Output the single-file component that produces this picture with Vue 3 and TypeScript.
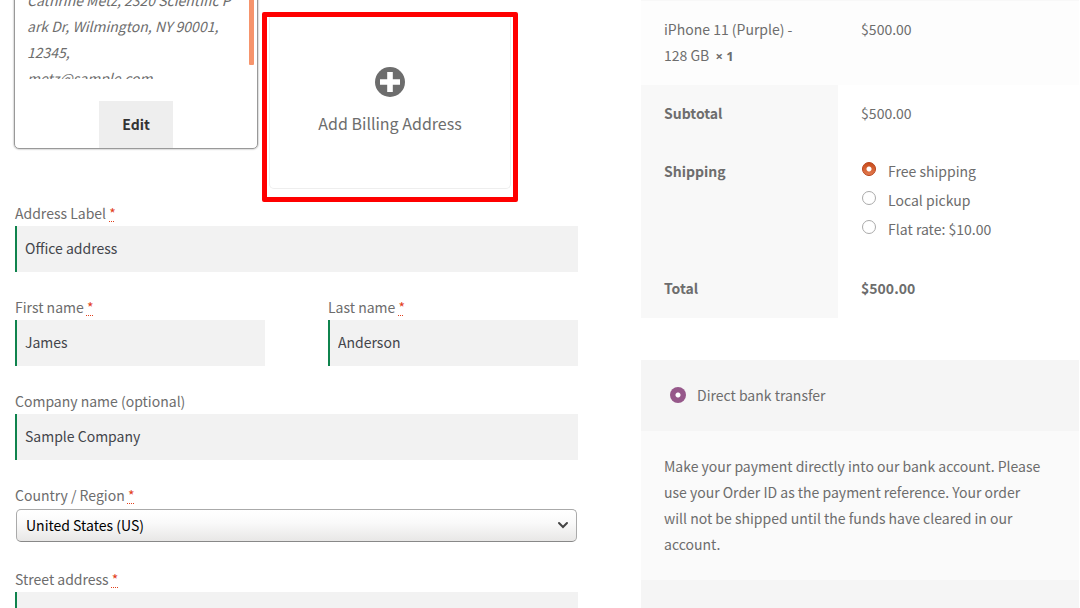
<script setup lang="ts">
import { ref } from 'vue'

interface ShippingOption {
  id: string
  label: string
}

const addressLines: string[] = [
  'Cathrine Metz, 2320 Scientific P',
  'ark Dr, Wilmington, NY 90001,',
  '12345,',
  'metz@sample.com',
]

const shippingOptions: ShippingOption[] = [
  { id: 'free', label: 'Free shipping' },
  { id: 'pickup', label: 'Local pickup' },
  { id: 'flat', label: 'Flat rate: $10.00' },
]

const addressLabel = ref('Office address')
const firstName = ref('James')
const lastName = ref('Anderson')
const company = ref('Sample Company')
const country = ref('US')
const street = ref('')
const shipping = ref('free')
const payment = ref('bank')
</script>

<template>
  <main class="checkout">
    <section class="billing">
      <div class="cards">
        <article class="card">
          <address class="address">
            <span v-for="line in addressLines" :key="line" class="address-line">{{ line }}</span>
          </address>
          <span class="thumb"></span>
          <button type="button" class="edit">Edit</button>
        </article>
        <div class="highlight">
          <button type="button" class="add">
            <svg class="plus" viewBox="0 0 30 30" aria-hidden="true">
              <circle cx="15" cy="15" r="15" fill="#6d6d6d" />
              <path d="M12.2 5h5.6v7.2H25v5.6h-7.2V25h-5.6v-7.2H5v-5.6h7.2z" fill="#fff" />
            </svg>
            <span>Add Billing Address</span>
          </button>
        </div>
      </div>

      <form class="form">
        <div class="field">
          <label for="address-label">Address Label <abbr title="required">*</abbr></label>
          <input id="address-label" v-model="addressLabel" type="text" />
        </div>
        <div class="pair">
          <div class="field">
            <label for="first-name">First name <abbr title="required">*</abbr></label>
            <input id="first-name" v-model="firstName" type="text" />
          </div>
          <div class="field">
            <label for="last-name">Last name <abbr title="required">*</abbr></label>
            <input id="last-name" v-model="lastName" type="text" />
          </div>
        </div>
        <div class="field">
          <label for="company">Company name (optional)</label>
          <input id="company" v-model="company" type="text" />
        </div>
        <div class="field">
          <label for="country">Country / Region <abbr title="required">*</abbr></label>
          <div class="select">
            <select id="country" v-model="country">
              <option value="US">United States (US)</option>
            </select>
            <svg class="chevron" viewBox="0 0 10 6" aria-hidden="true">
              <path d="M1 1l4 4 4-4" fill="none" stroke="#444" stroke-width="2" stroke-linecap="round" />
            </svg>
          </div>
        </div>
        <div class="field">
          <label for="street">Street address <abbr title="required">*</abbr></label>
          <input id="street" v-model="street" type="text" />
        </div>
      </form>
    </section>

    <section class="review">
      <table class="order">
        <tbody>
          <tr class="item">
            <td>iPhone 11 (Purple) - 128 GB <strong class="quantity">× 1</strong></td>
            <td>$500.00</td>
          </tr>
        </tbody>
        <tfoot>
          <tr>
            <th scope="row">Subtotal</th>
            <td>$500.00</td>
          </tr>
          <tr>
            <th scope="row">Shipping</th>
            <td>
              <ul class="methods">
                <li v-for="option in shippingOptions" :key="option.id">
                  <input :id="option.id" v-model="shipping" type="radio" name="shipping" :value="option.id" />
                  <label :for="option.id">{{ option.label }}</label>
                </li>
              </ul>
            </td>
          </tr>
          <tr>
            <th scope="row">Total</th>
            <td><strong>$500.00</strong></td>
          </tr>
        </tfoot>
      </table>

      <div class="payment">
        <div class="method">
          <input id="bank" v-model="payment" type="radio" name="payment" value="bank" />
          <label for="bank">Direct bank transfer</label>
        </div>
        <p class="details">
          Make your payment directly into our bank account. Please use your Order ID as the payment
          reference. Your order will not be shipped until the funds have cleared in our account.
        </p>
        <div class="method"></div>
      </div>
    </section>
  </main>
</template>

<style>
body {
  margin: 0;
  background: #fff;
}
</style>

<style scoped>
.checkout,
.checkout * {
  box-sizing: border-box;
}

.checkout {
  display: grid;
  grid-template-columns: minmax(0, 563fr) minmax(0, 438fr);
  column-gap: 63px;
  height: 100vh;
  padding: 0 1px 0 15px;
  overflow: hidden;
  color: #6d6d6d;
  font-family: "Noto Sans CJK SC", "Noto Sans", sans-serif;
  font-size: 14px;
  line-height: 26px;
}

button,
input,
select {
  margin: 0;
  border: 0;
  font: inherit;
}

.cards {
  display: flex;
  align-items: flex-start;
  gap: 4px;
  margin-left: -1px;
}

.card {
  position: relative;
  display: flex;
  flex-direction: column;
  align-items: center;
  width: 244px;
  margin-top: -22px;
  border: 1px solid #999;
  border-radius: 5px;
  box-shadow: 0 0 2px #888;
}

.address {
  align-self: stretch;
  height: 100px;
  padding: 8px 0 0 12px;
  overflow: hidden;
  white-space: nowrap;
}

.address-line {
  display: block;
}

.thumb {
  position: absolute;
  top: 0;
  right: 3px;
  width: 5px;
  height: 86px;
  border-radius: 1px;
  background: #f6946c;
}

.edit {
  width: 74px;
  height: 47px;
  margin-top: 22px;
  padding: 0 0 2px;
  background: #eee;
  color: #333;
  font-weight: 700;
}

.highlight {
  width: 256px;
  height: 190px;
  margin-top: 12px;
  padding: 0 2px 8px;
  border: 5px solid #f00;
  border-radius: 2px;
}

.add {
  display: flex;
  flex-direction: column;
  align-items: center;
  gap: 13px;
  width: 100%;
  height: 100%;
  padding: 50px 0 0;
  border: 1px solid #eee;
  border-top: 0;
  border-radius: 0 0 5px 5px;
  background: #fff;
  color: inherit;
  font-size: 16px;
}

.plus {
  width: 30px;
  height: 30px;
}

.form {
  margin-top: -2px;
}

.field {
  display: flex;
  flex-direction: column;
  margin-bottom: 22px;
}

.pair {
  display: grid;
  grid-template-columns: 1fr 1fr;
  column-gap: 63px;
}

abbr {
  color: #e2401c;
  text-decoration: underline dotted 1px;
  text-underline-offset: 2px;
}

input[type="text"] {
  width: 100%;
  height: 46px;
  padding: 0 8px 2px;
  border-left: 2px solid #0f834d;
  border-radius: 0;
  background: #f2f2f2;
  color: #43454b;
}

.select {
  position: relative;
  margin: 1px 1px 2px;
}

select {
  display: block;
  width: 100%;
  height: 33px;
  padding: 0 9px 2px;
  appearance: none;
  border: 1px solid #aaa;
  border-bottom-color: #888;
  border-radius: 5px;
  background: linear-gradient(#fff, #fafafa 40%, #e8e7e6);
  color: #000;
}

.chevron {
  position: absolute;
  top: 13px;
  right: 9px;
  width: 10px;
  height: 6px;
  overflow: visible;
  pointer-events: none;
}

.order {
  width: 100%;
  border-collapse: collapse;
  border-top: 1px solid #f8f8f8;
  table-layout: fixed;
}

th,
td {
  padding: 15px 23px 17px;
  text-align: left;
  vertical-align: top;
}

th,
.item td:first-child {
  width: 45%;
}

th {
  background: #f8f8f8;
}

.item td {
  background: #fdfdfd;
}

.quantity {
  margin-left: 3px;
  font-family: "Open Sans", sans-serif;
  font-size: 13px;
  line-height: 20px;
}

.methods {
  display: flex;
  flex-direction: column;
  gap: 3px;
  margin: 0;
  padding: 0 0 1px;
  list-style: none;
}

.methods li {
  display: flex;
  gap: 12px;
}

input[type="radio"] {
  flex: none;
  appearance: none;
  border-radius: 50%;
}

.methods input {
  width: 14px;
  height: 14px;
  margin: 4px 0 0 1px;
  border: 1px solid #aaa;
  background: #fff;
}

.methods input:checked {
  border-color: #b8431a;
  background: radial-gradient(circle, #fff 2px, transparent 3px), linear-gradient(#c94c1c, #e27a4e);
}

.payment {
  margin-top: 42px;
}

.method {
  display: flex;
  align-items: center;
  gap: 11px;
  height: 71px;
  padding: 0 29px 2px;
  background: #f5f5f5;
}

.method input {
  width: 16px;
  height: 16px;
  background: radial-gradient(circle, #fff 2px, #96588a 3px);
}

.details {
  margin: 0;
  padding: 22px 36px 23px 23px;
  background: #fafafa;
}
</style>
